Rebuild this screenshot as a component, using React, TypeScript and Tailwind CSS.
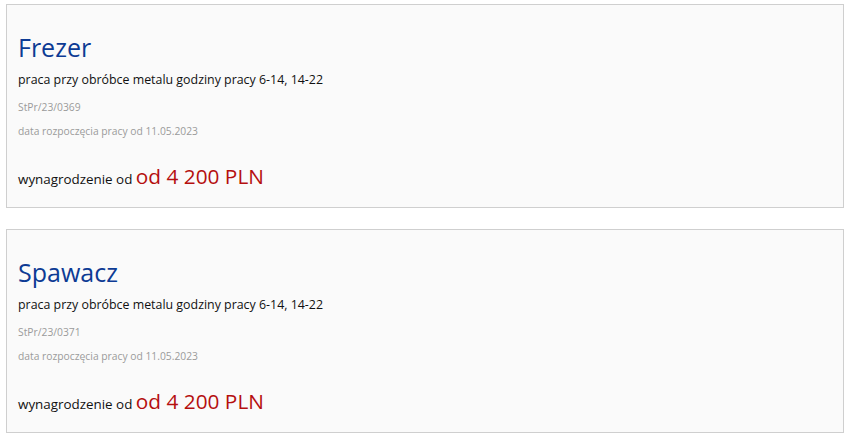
import React from "react";

const jobs = [
  { title: "Frezer", code: "StPr/23/0369" },
  { title: "Spawacz", code: "StPr/23/0371" },
];

export default function App() {
  return (
    <div
      className="w-[850px] h-[439px] bg-white pt-[4px] px-[6px] flex flex-col gap-[21px]"
      style={{ fontFamily: '"Open Sans", sans-serif' }}
    >
      {jobs.map((j) => (
        <div
          key={j.code}
          className="w-[838px] h-[204px] border border-[#cfcfcf] bg-[#fafafa] pl-[11px] pt-[26px] flex flex-col"
        >
          <h2 className="text-[25px] leading-[33px] text-[#0d3b94]">{j.title}</h2>
          <p className="text-[12.4px] leading-[18px] text-[#111] mt-[7px]">
            praca przy obróbce metalu godziny pracy 6-14, 14-22
          </p>
          <p className="text-[10.3px] leading-[14px] text-[#9a9a9a] mt-[11px]">{j.code}</p>
          <p className="text-[10.3px] leading-[14px] text-[#9a9a9a] mt-[10px]">
            data rozpoczęcia pracy od 11.05.2023
          </p>
          <p className="mt-[24px] text-[13.4px] leading-[28px] text-[#111]">
            wynagrodzenie od{" "}
            <span className="text-[20.8px] text-[#b50f0f]">od 4 200 PLN</span>
          </p>
        </div>
      ))}
    </div>
  );
}
